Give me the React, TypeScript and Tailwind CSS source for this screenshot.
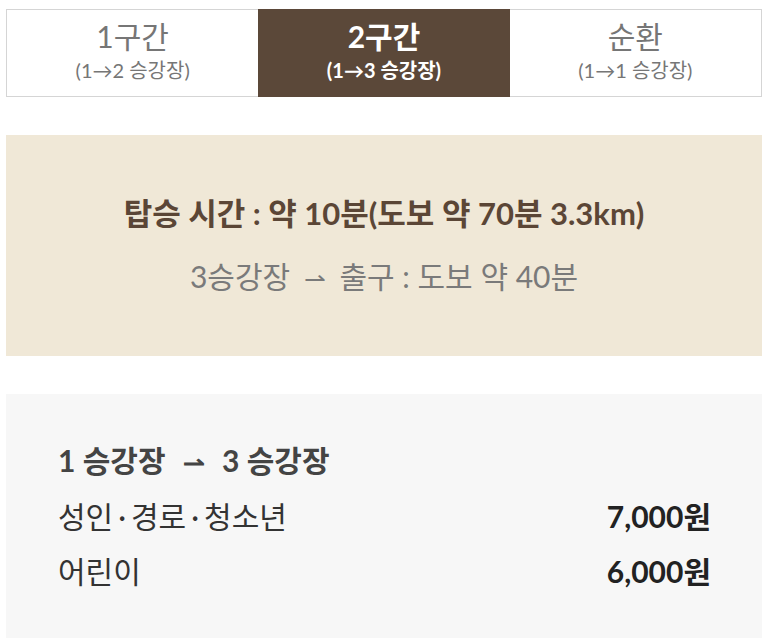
import { useState } from 'react';

const tabs = [
  { id: 1, title: '1구간', sub: '(1→2 승강장)' },
  { id: 2, title: '2구간', sub: '(1→3 승강장)' },
  { id: 3, title: '순환', sub: '(1→1 승강장)' },
];

const fares = [
  { label: ['성인', '경로', '청소년'], price: '7,000원' },
  { label: ['어린이'], price: '6,000원' },
];

const font = "font-['Lato','Noto_Sans_CJK_KR',sans-serif]";

export default function App() {
  const [active, setActive] = useState(2);

  return (
    <div className={`w-[768px] bg-white px-[6px] pt-[9px] pb-[3px] ${font}`}>
      {/* Route tabs */}
      <div className="flex border border-[#d5d5d5]">
        {tabs.map((tab) => {
          const on = tab.id === active;
          return (
            <button
              key={tab.id}
              onClick={() => setActive(tab.id)}
              className={
                on
                  ? '-my-px flex h-[88px] flex-1 flex-col items-center bg-[#5b4839] pt-[10px] text-white'
                  : 'flex h-[86px] flex-1 flex-col items-center pt-[9px] text-[#767676]'
              }
            >
              <span className={on ? 'text-[30px] font-bold leading-[34px]' : 'text-[30px] leading-[34px]'}>
                {tab.title}
              </span>
              <span className={on ? 'mt-[5px] text-[20px] font-bold leading-[24px]' : 'mt-[5px] text-[20px] leading-[24px]'}>
                {tab.sub}
              </span>
            </button>
          );
        })}
      </div>

      {/* Travel time */}
      <div className="mt-[38px] flex h-[221px] flex-col items-center justify-center gap-[23px] bg-[#f0e8d7]">
        <p className="text-[31px] font-bold leading-[40px] text-[#5b4636]">
          탑승 시간 : 약 10분(도보 약 70분 3.3km)
        </p>
        <p className="text-[30px] leading-[40px] text-[#7a7a7a]">
          3승강장 <span className="mx-[6px] text-[26px]">⇀</span> 출구 : 도보 약 40분
        </p>
      </div>

      {/* Fares */}
      <div className="mt-[38px] h-[244px] bg-[#f7f7f7] pl-[52px] pr-[51px] pt-[46px]">
        <p className="text-[30px] font-bold leading-[40px] text-[#444]">
          1 승강장 <span className="mx-[10px] text-[26px]">⇀</span> 3 승강장
        </p>
        {fares.map((f, i) => (
          <div
            key={f.price}
            className={i === 0 ? 'mt-[14px] flex items-center justify-between leading-[40px]' : 'mt-[15px] flex items-center justify-between leading-[40px]'}
          >
            <span className="text-[30px] text-[#333]">
              {f.label.map((part, j) => (
                <span key={part}>
                  {j > 0 && <span className="mx-[5px]">·</span>}
                  {part}
                </span>
              ))}
            </span>
            <span className="text-[30px] font-bold text-[#222]">{f.price}</span>
          </div>
        ))}
      </div>
    </div>
  );
}
